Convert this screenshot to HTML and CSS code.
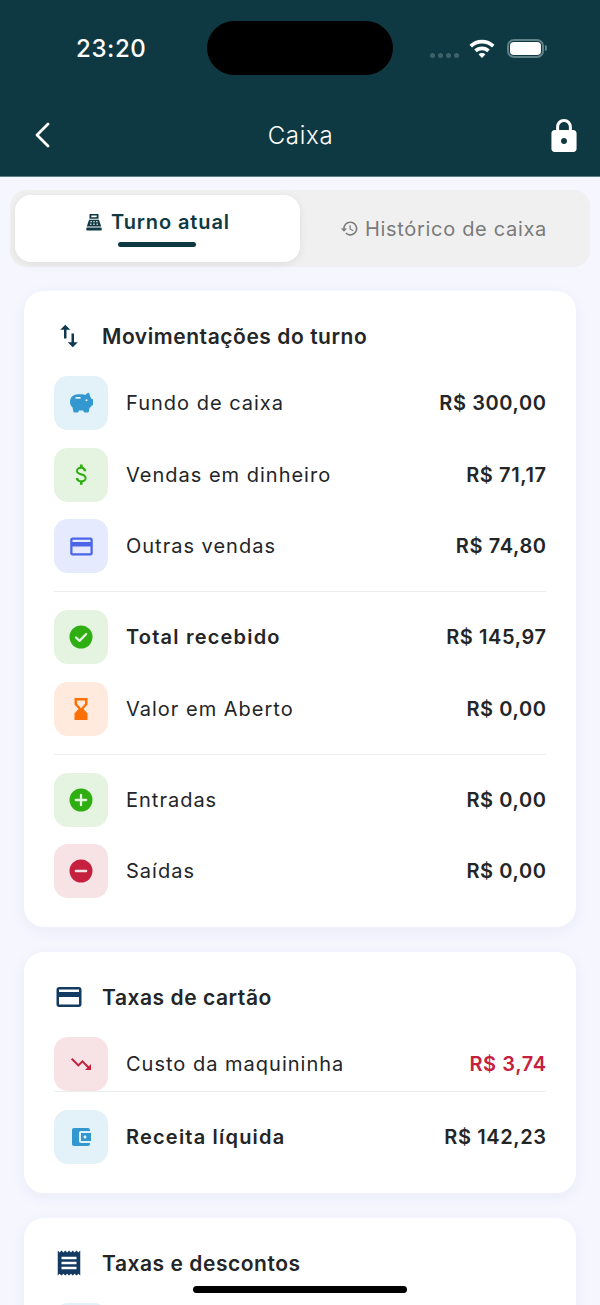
FILE: index.html
```html
<!DOCTYPE html>
<html lang="pt-BR">
<head>
    <meta charset="UTF-8">
    <title>Caixa</title>
    <link rel="stylesheet" href="styles.css">
</head>
<body>
    <header class="top">
        <div class="status">
            <span class="time">23:20</span>
            <div class="island"></div>
            <div class="dots"><i></i><i></i><i></i><i></i></div>
            <svg class="wifi" viewBox="0 0 24 18"><path d="M12 2.2c3.9 0 7.4 1.5 10 4l-2 2.1C17.9 6.300 15.100 5.100 12 5.100S6.100 6.300 4 8.300L2 6.200c2.600-2.500 6.100-4 10-4z"/><path d="M12 7.600c2.400 0 4.500.9 6.200 2.400l-2 2.100C15.100 11.100 13.600 10.500 12 10.500s-3.100.6-4.200 1.600l-2-2.100C7.500 8.500 9.600 7.600 12 7.600z"/><path d="M12 12.800c1.100 0 2 .4 2.700 1.100L12 16.800l-2.700-2.900c.7-.7 1.600-1.100 2.700-1.100z"/></svg>
            <div class="battery"><div class="battery-fill"></div></div>
            <div class="battery-tip"></div>
        </div>
        <nav class="nav">
            <svg class="back" viewBox="0 0 16 26"><path d="M14 2L3 13l11 11" fill="none" stroke="#fff" stroke-width="2.800" stroke-linecap="round" stroke-linejoin="round"/></svg>
            <h1>Caixa</h1>
            <svg class="lock" viewBox="4 1 16 21"><path d="M18 8h-1V6c0-2.760-2.240-5-5-5S7 3.240 7 6v2H6c-1.100 0-2 .9-2 2v10c0 1.100.9 2 2 2h12c1.100 0 2-.9 2-2V10c0-1.100-.9-2-2-2zm-6 8.900c-1.100 0-1.900-.8-1.900-1.900s.8-1.900 1.900-1.900 1.900.8 1.900 1.900-.8 1.900-1.900 1.900zM15.100 8H8.900V6c0-1.710 1.390-3.100 3.100-3.100 1.710 0 3.100 1.390 3.100 3.100v2z"/></svg>
        </nav>
    </header>

    <main class="content">
        <div class="tabs">
            <div class="tab tab-active">
                <div class="tab-label">
                    <svg class="register" viewBox="0 0 20 20"><path d="M5 1h10v5.500H5zM7 2.800v1.800h6V2.800z"/><path d="M4.500 7.500h11L18 15H2z"/><rect x="1.500" y="16" width="17" height="3.500" rx=".6"/><g fill="#fff"><rect x="6" y="9" width="1.600" height="1.300"/><rect x="9.200" y="9" width="1.600" height="1.300"/><rect x="12.400" y="9" width="1.600" height="1.300"/><rect x="5.600" y="11.800" width="1.600" height="1.300"/><rect x="9.200" y="11.800" width="1.600" height="1.300"/><rect x="12.800" y="11.800" width="1.600" height="1.300"/></g></svg>
                    <span>Turno atual</span>
                </div>
                <div class="tab-bar"></div>
            </div>
            <div class="tab tab-other">
                <svg class="history" viewBox="0 0 24 24"><path d="M13 3c-4.970 0-9 4.030-9 9H1l3.890 3.890.07.14L9 12H6c0-3.870 3.130-7 7-7s7 3.130 7 7-3.130 7-7 7c-1.930 0-3.680-.79-4.940-2.060l-1.420 1.420C8.270 19.990 10.510 21 13 21c4.970 0 9-4.030 9-9s-4.030-9-9-9zm-1 5v5l4.280 2.540.72-1.210-3.500-2.080V8H12z"/></svg>
                <span>Histórico de caixa</span>
            </div>
        </div>

        <section class="card">
            <div class="card-head">
                <svg class="head-icon swap" viewBox="0 0 24 24"><path d="M16 17.010V10h-2v7.010h-3L15 21l4-3.990h-3zM9 3L5 6.990h3V14h2V6.990h3L9 3z"/></svg>
                <h2>Movimentações do turno</h2>
            </div>
            <div class="rows">
                <div class="row">
                    <div class="tile tile-blue">
                        <svg class="ico c-blue" viewBox="0 0 24 24"><path d="M20 1.800c-1.600.2-2.800 1-3.600 2.200C15.300 3.400 14.200 3.200 13 3.200H9C4.800 3.200 1 6 1 10.800c0 2.500 1 4.400 2.500 5.600l.9 4.100c.1.600.6 1 1.200 1h2.800c.6 0 1.100-.4 1.200-1l.2-1h4.600l.2 1c.1.600.6 1 1.200 1h2.800c.6 0 1.100-.4 1.200-1l.7-3.500c1.200-.7 2-1.600 2.500-2.800h1.200V8.200h-1.500c-.3-.8-.7-1.500-1.300-2.100z"/><rect x="6.300" y="6" width="5.500" height="1.800" rx=".9" fill="#e3f1f8"/><circle cx="17.500" cy="9.300" r="1" fill="#e3f1f8"/></svg>
                    </div>
                    <span class="label">Fundo de caixa</span>
                    <span class="value">R$ 300,00</span>
                </div>
                <div class="row">
                    <div class="tile tile-green">
                        <svg class="ico ico-big c-green" viewBox="0 0 24 24"><path d="M11.800 10.900c-2.270-.59-3-1.200-3-2.150 0-1.090 1.010-1.850 2.700-1.850 1.780 0 2.440.85 2.500 2.100h2.210c-.07-1.720-1.120-3.300-3.210-3.810V3h-2.400v2.160c-1.940.42-3.500 1.680-3.500 3.610 0 2.310 1.910 3.460 4.700 4.130 2.500.6 3 1.480 3 2.410 0 .69-.49 1.790-2.700 1.790-2.060 0-2.870-.92-2.980-2.100h-2.200c.12 2.190 1.760 3.420 3.680 3.830V21h2.400v-2.150c1.950-.37 3.500-1.500 3.500-3.550 0-2.840-2.430-3.810-4.700-4.400z"/></svg>
                    </div>
                    <span class="label">Vendas em dinheiro</span>
                    <span class="value">R$ 71,17</span>
                </div>
                <div class="row">
                    <div class="tile tile-indigo">
                        <svg class="ico ico-big c-indigo" viewBox="0 0 24 24"><path d="M20 4H4c-1.110 0-1.990.89-1.990 2L2 18c0 1.110.89 2 2 2h16c1.110 0 2-.89 2-2V6c0-1.110-.89-2-2-2zm0 14H4v-6h16v6zm0-10H4V6h16v2z"/></svg>
                    </div>
                    <span class="label">Outras vendas</span>
                    <span class="value">R$ 74,80</span>
                </div>
            </div>
            <hr class="divider">
            <div class="rows">
                <div class="row">
                    <div class="tile tile-green">
                        <svg class="ico c-green" viewBox="0 0 24 24"><circle cx="12" cy="12" r="11.500"/><path d="M7 12.500l3.500 3.400L17.200 9" fill="none" stroke="#e4f4e0" stroke-width="2.300" stroke-linecap="round" stroke-linejoin="round"/></svg>
                    </div>
                    <span class="label label-strong">Total recebido</span>
                    <span class="value">R$ 145,97</span>
                </div>
                <div class="row">
                    <div class="tile tile-orange">
                        <svg class="ico c-orange" viewBox="0 0 24 24"><path d="M18.500 23v-6.500L14.500 12l4-4.500V1h-13v6.500l4 4.500-4 4.500V23h13zM8 6.700V3.400h8v3.300l-4 4.500-4-4.500z"/></svg>
                    </div>
                    <span class="label">Valor em Aberto</span>
                    <span class="value">R$ 0,00</span>
                </div>
            </div>
            <hr class="divider">
            <div class="rows">
                <div class="row">
                    <div class="tile tile-green">
                        <svg class="ico c-green" viewBox="0 0 24 24"><circle cx="12" cy="12" r="11.500"/><path d="M12 6.800v10.400M6.800 12h10.400" fill="none" stroke="#e4f4e0" stroke-width="2.300" stroke-linecap="round"/></svg>
                    </div>
                    <span class="label">Entradas</span>
                    <span class="value">R$ 0,00</span>
                </div>
                <div class="row">
                    <div class="tile tile-red">
                        <svg class="ico c-red" viewBox="0 0 24 24"><circle cx="12" cy="12" r="11.500"/><path d="M6.800 12h10.400" fill="none" stroke="#f7e3e6" stroke-width="2.300" stroke-linecap="round"/></svg>
                    </div>
                    <span class="label">Saídas</span>
                    <span class="value">R$ 0,00</span>
                </div>
            </div>
        </section>

        <section class="card">
            <div class="card-head">
                <svg class="head-icon card-icon" viewBox="0 0 24 24"><path d="M20 4H4c-1.110 0-1.990.89-1.990 2L2 18c0 1.110.89 2 2 2h16c1.110 0 2-.89 2-2V6c0-1.110-.89-2-2-2zm0 14H4v-6h16v6zm0-10H4V6h16v2z"/></svg>
                <h2>Taxas de cartão</h2>
            </div>
            <div class="row">
                <div class="tile tile-red">
                    <svg class="ico c-red" viewBox="0 0 24 24"><path d="M16 18l2.290-2.290-4.880-4.880-4 4L2 7.410 3.410 6l6 6 4-4 6.300 6.290L22 12v6h-6z"/></svg>
                </div>
                <span class="label">Custo da maquininha</span>
                <span class="value value-red">R$ 3,74</span>
            </div>
            <hr class="divider divider-tight">
            <div class="row">
                <div class="tile tile-blue">
                    <svg class="ico c-blue" viewBox="0 0 24 24"><path d="M21 18v1c0 1.100-.9 2-2 2H5c-1.110 0-2-.9-2-2V5c0-1.100.89-2 2-2h14c1.100 0 2 .9 2 2v1h-9c-1.110 0-2 .9-2 2v8c0 1.100.89 2 2 2h9zm-9-2h10V8H12v8zm4-2.500c-.83 0-1.500-.67-1.500-1.500s.67-1.500 1.500-1.500 1.500.67 1.500 1.500-.67 1.500-1.500 1.500z"/></svg>
                </div>
                <span class="label label-strong">Receita líquida</span>
                <span class="value">R$ 142,23</span>
            </div>
        </section>

        <section class="card">
            <div class="card-head">
                <svg class="head-icon card-icon" viewBox="0 0 24 24"><path d="M18 17H6v-2h12v2zm0-4H6v-2h12v2zm0-4H6V7h12v2zM3 22l1.500-1.500L6 22l1.500-1.500L9 22l1.500-1.500L12 22l1.500-1.500L15 22l1.500-1.500L18 22l1.500-1.500L21 22V2l-1.500 1.500L18 2l-1.500 1.500L15 2l-1.500 1.500L12 2l-1.500 1.500L9 2 7.500 3.500 6 2 4.500 3.500 3 2v20z"/></svg>
                <h2>Taxas e descontos</h2>
            </div>
            <div class="row">
                <div class="tile tile-blue"></div>
            </div>
        </section>
    </main>

    <div class="home-bar"></div>
</body>
</html>
```

FILE: styles.css
```css
* {
    box-sizing: border-box;
}
html, body {
    margin: 0;
    height: 1305px;
    overflow: hidden;
}
body {
    position: relative;
    font-family: Inter, "Noto Sans", sans-serif;
    background-color: #f5f6fe;
    color: #232527;
}

/* header */
.top {
    height: 177px;
    padding-top: 21px;
    background-color: #0f3942;
    border-bottom: 1px solid #5d7d84;
    color: #fff;
}
.status {
    display: flex;
    align-items: center;
    height: 54px;
    padding-left: 76px;
}
.time {
    width: 131px;
    font-size: 24px;
    font-weight: 500;
    letter-spacing: 0.6px;
}
.island {
    width: 186px;
    height: 54px;
    border-radius: 27px;
    background: #000;
}
.dots {
    display: flex;
    gap: 3px;
    margin: 14px 0 0 37px;
}
.dots i {
    width: 5px;
    height: 5px;
    border-radius: 50%;
    background: #3d626a;
}
.wifi {
    width: 30px;
    height: 22.500px;
    margin-left: 8px;
    fill: #fff;
}
.battery {
    width: 37px;
    height: 19px;
    margin-left: 9.500px;
    padding: 1px;
    border: 2px solid #5f8188;
    border-radius: 7px;
}
.battery-fill {
    height: 100%;
    border-radius: 4px;
    background: #fff;
}
.battery-tip {
    width: 2px;
    height: 6px;
    margin-left: 1px;
    border-radius: 0 2px 2px 0;
    background: #5f8188;
}
.nav {
    display: flex;
    align-items: center;
    justify-content: space-between;
    height: 40px;
    margin-top: 40px;
    padding: 0 23px 0 34px;
}
.back {
    width: 16px;
    height: 26px;
}
.nav h1 {
    margin: 0;
    font-size: 24px;
    font-weight: 300;
    letter-spacing: 0.7px;
}
.lock {
    width: 26px;
    height: 33px;
    fill: #fff;
}

/* tabs */
.content {
    padding: 13px 24px 0;
}
.tabs {
    display: flex;
    height: 77px;
    margin: 0 -14px 24px;
    padding: 5px;
    border-radius: 16px;
    background: #f0f0f0;
}
.tab {
    flex: 1;
    display: flex;
    flex-direction: column;
    align-items: center;
    justify-content: center;
}
.tab-active {
    flex: 0 0 285px;
    border-radius: 16px;
    background: #fff;
    box-shadow: 0 2px 8px rgba(0, 0, 0, 0.08);
    color: #0f3942;
}
.tab-label {
    display: flex;
    align-items: center;
    gap: 8px;
    height: 30px;
    margin-top: -3px;
    font-size: 20px;
    font-weight: 600;
    letter-spacing: 0.9px;
}
.register {
    width: 18px;
    height: 18px;
    fill: #0f3942;
}
.tab-bar {
    width: 78px;
    height: 5px;
    margin-top: 5px;
    margin-left: -1px;
    border-radius: 3px;
    background: #0f3942;
}
.tab-other {
    flex-direction: row;
    gap: 6px;
    padding-left: 2px;
    color: #7a7a7a;
    font-size: 20px;
    font-weight: 400;
    letter-spacing: 0.68px;
}
.history {
    width: 19px;
    height: 19px;
    fill: #7a7a7a;
}

/* cards */
.card {
    margin-bottom: 25px;
    padding: 30px 30px 29px;
    border-radius: 20px;
    background: #fff;
    box-shadow: 0 4px 16px rgba(40, 50, 110, 0.05);
}
.card-head {
    display: flex;
    align-items: center;
    height: 30px;
    margin-bottom: 25px;
}
.card-head h2 {
    margin: 0;
    font-size: 21px;
    font-weight: 600;
    letter-spacing: 0.55px;
}
.head-icon {
    width: 30px;
    height: 30px;
    margin-right: 18px;
    fill: #143a5c;
}
.swap {
    fill: #0f3950;
}
.card-icon {
    fill: #123a62;
}
.rows {
    display: flex;
    flex-direction: column;
    gap: 17.500px;
}
.row {
    display: flex;
    align-items: center;
    height: 54px;
}
.tile {
    flex: none;
    display: flex;
    align-items: center;
    justify-content: center;
    width: 54px;
    height: 54px;
    margin-right: 18px;
    border-radius: 14px;
}
.tile-blue { background: #e3f1f8; }
.tile-green { background: #e4f4e0; }
.tile-indigo { background: #e6eafe; }
.tile-orange { background: #ffeadd; }
.tile-red { background: #f7e3e6; }
.ico {
    width: 24px;
    height: 24px;
}
.ico-big {
    width: 27px;
    height: 27px;
}
.c-blue { fill: #3398d0; }
.c-green { fill: #2fae12; }
.c-indigo { fill: #4a65e8; }
.c-orange { fill: #fb7108; }
.c-red { fill: #c5203d; }
.label {
    flex: 1;
    font-size: 20px;
    letter-spacing: 1px;
}
.label-strong {
    font-weight: 600;
    letter-spacing: 1.2px;
}
.value {
    margin-right: -0.6px;
    font-size: 20px;
    font-weight: 600;
    letter-spacing: 0.6px;
}
.value-red {
    color: #c5203d;
}
.divider {
    height: 1px;
    margin: 18px 0;
    border: 0;
    background: #eceded;
}
.divider-tight {
    margin-top: 0;
}
.home-bar {
    position: absolute;
    left: 193px;
    bottom: 12px;
    width: 214px;
    height: 7px;
    border-radius: 4px;
    background: #000;
}
```
